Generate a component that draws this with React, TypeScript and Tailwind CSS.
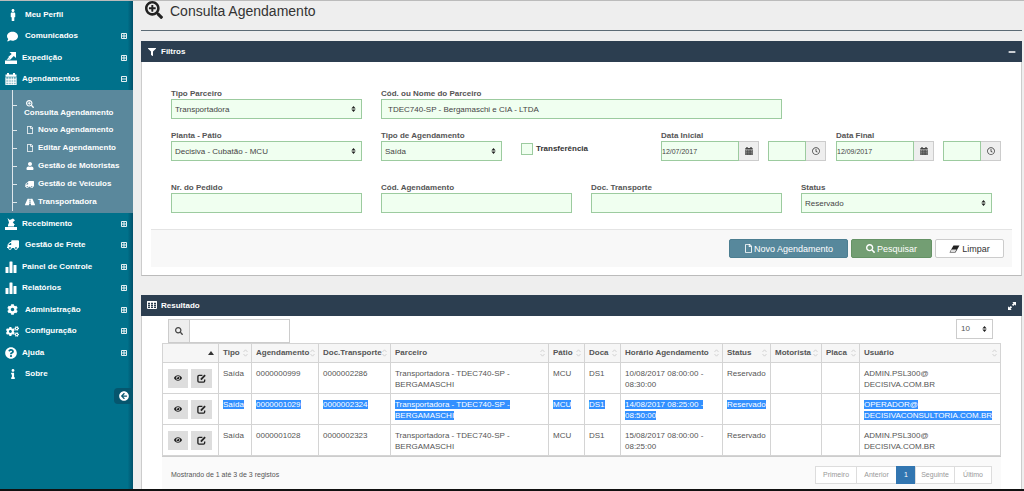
import { useState } from 'react';
import type { ReactNode } from 'react';
import {
  FaMale, FaComment, FaSearchPlus, FaRegFile, FaUser, FaTruck, FaRoad, FaCog, FaCogs,
  FaQuestionCircle, FaInfo, FaArrowCircleLeft, FaFilter, FaMinus, FaEye, FaSearch, FaRegClock,
} from 'react-icons/fa';

function TrayOut() {
  return (
    <svg viewBox="0 0 12 12" className="size-[12px]" fill="currentColor" aria-hidden="true">
      <path d="M0 8.5h12V12H0z" />
      <path d="M4.5 0H11v6L8.800 4.100 5.500 7.400 3.200 5.100 6.700 1.900z" />
      <path d="M1.500 7.800 3.800 5.600 5.600 7.800z" />
    </svg>
  );
}

function TrayIn() {
  return (
    <svg viewBox="0 0 12 12" className="size-[12px]" fill="currentColor" aria-hidden="true">
      <path d="M0 9h12v3H0z" />
      <path d="M2.500 0 4.800 2 8 .500 10 2.300 7.800 4.300 10 7H9v1.500H3V7l1-2.500z" />
    </svg>
  );
}

function Bars() {
  return (
    <svg viewBox="0 0 12 12" className="size-[12px]" fill="currentColor" aria-hidden="true">
      <rect x="0.500" y="6" width="3" height="6" rx="0.500" />
      <rect x="4.500" y="0.500" width="3" height="11.500" rx="0.500" />
      <rect x="8.500" y="4" width="3" height="8" rx="0.500" />
    </svg>
  );
}

function Calendar({ className }: { className: string }) {
  return (
    <svg viewBox="0 0 12 12" className={className} fill="currentColor" aria-hidden="true">
      <path d="M.500 1.500H2V0h2v1.500h4V0h2v1.500h1.500v2.300H.500z" />
      <path d="M.500 4.300h11V12H.500z" fillOpacity="0.550" />
      <path d="M.500 6.300h11v.900H.500zM.500 8.800h11v.900H.500zM.500 11.200h11v.800H.500zM.500 4.300h.800V12H.500zM3.400 4.300h.800V12h-.800zM5.800 4.300h.800V12h-.800zM8.200 4.300H9V12h-.800zM10.700 4.300h.800V12h-.800z" />
    </svg>
  );
}

function TableIcon() {
  return (
    <svg viewBox="0 0 10 9" className="h-[9px] w-[10px]" fill="none" stroke="currentColor" aria-hidden="true">
      <path d="M.500 .500h9v7h-9z" />
      <path d="M0 1h10" strokeWidth="1.500" />
      <path d="M3.500 1v7M6.500 1v7" />
      <path d="M0 3.500h10M0 5.500h10" strokeWidth="0.500" />
    </svg>
  );
}

function BoxMark({ open }: { open: boolean }) {
  return (
    <svg viewBox="0 0 6 6" className="size-[6px]" fill="none" stroke="currentColor" aria-hidden="true">
      <path d="M.500 .500h5v5h-5z" strokeWidth="0.900" />
      <path d={open ? 'M1 3h4' : 'M1 3h4M3 1v4'} strokeWidth="0.900" />
    </svg>
  );
}

function Eraser() {
  return (
    <svg viewBox="0 0 11 8" className="h-[8px] w-[11px]" aria-hidden="true">
      <path d="M4.500 .500h6L6.500 7.500H.500z" fill="#222" />
      <path d="M2.500 4.600h5L6.200 6.900H1.300z" fill="#fff" fillOpacity="0.850" />
    </svg>
  );
}

function Expand() {
  return (
    <svg viewBox="0 0 8 8" className="size-[8px]" fill="currentColor" aria-hidden="true">
      <path d="M4.300 0H8v3.700L6.800 2.500 5.200 4.100 3.900 2.800 5.500 1.200zM3.700 8H0V4.300l1.200 1.200 1.600-1.600 1.300 1.300L2.500 6.800z" />
    </svg>
  );
}

function EditIcon() {
  return (
    <svg viewBox="0 0 10 10" className="size-[9px]" fill="none" stroke="currentColor" aria-hidden="true">
      <path d="M6 1.500H2.200Q1 1.500 1 2.700v5.100Q1 9 2.200 9h5.100Q8.500 9 8.500 7.800V6" strokeWidth="1.500" />
      <path d="M4.300 6.200 9 1.300" strokeWidth="2" />
    </svg>
  );
}

function UpDown({ className }: { className: string }) {
  return (
    <svg viewBox="0 0 5 7" className={className} fill="currentColor" aria-hidden="true">
      <path d="M2.500 0 5 2.800H0zM2.500 7 0 4.200h5z" />
    </svg>
  );
}

type MenuEntry = { label: string; icon: ReactNode; indent?: boolean; mark?: 'plus' | 'minus' };

const topMenu: MenuEntry[] = [
  { label: 'Meu Perfil', icon: <FaMale className="size-[12px]" />, indent: true },
  { label: 'Comunicados', icon: <FaComment className="size-[11px]" />, indent: true, mark: 'plus' },
  { label: 'Expedição', icon: <TrayOut />, mark: 'plus' },
  { label: 'Agendamentos', icon: <Calendar className="size-[12px]" />, mark: 'minus' },
];

const bottomMenu: MenuEntry[] = [
  { label: 'Recebimento', icon: <TrayIn />, mark: 'plus' },
  { label: 'Gestão de Frete', icon: <FaTruck className="size-[12px] -scale-x-100" />, indent: true, mark: 'plus' },
  { label: 'Painel de Controle', icon: <Bars />, mark: 'plus' },
  { label: 'Relatórios', icon: <Bars />, mark: 'plus' },
  { label: 'Administração', icon: <FaCog className="size-[11px]" />, indent: true, mark: 'plus' },
  { label: 'Configuração', icon: <FaCogs className="size-[13px]" />, indent: true, mark: 'plus' },
  { label: 'Ajuda', icon: <FaQuestionCircle className="size-[12px]" />, mark: 'plus' },
  { label: 'Sobre', icon: <FaInfo className="size-[10px]" />, indent: true },
];

const subMenu = [
  { label: 'Novo Agendamento', icon: <FaRegFile className="size-[8px]" /> },
  { label: 'Editar Agendamento', icon: <FaRegFile className="size-[8px]" /> },
  { label: 'Gestão de Motoristas', icon: <FaUser className="size-[8px]" /> },
  { label: 'Gestão de Veículos', icon: <FaTruck className="size-[9px] -scale-x-100" /> },
  { label: 'Transportadora', icon: <FaRoad className="size-[10px]" /> },
];

function MenuList({ items }: { items: MenuEntry[] }) {
  return (
    <ul>
      {items.map((item) => (
        <li key={item.label} className="h-[21px] even:h-[22px]">
          <a href="#" className="flex h-full items-center pr-[6px]">
            <span className={item.indent ? 'flex w-[25px] justify-center' : 'flex w-[22px] justify-center'}>{item.icon}</span>
            <span className="flex-1">{item.label}</span>
            {item.mark && <BoxMark open={item.mark === 'minus'} />}
          </a>
        </li>
      ))}
    </ul>
  );
}

function Sidebar() {
  return (
    <nav className="w-[133px] shrink-0 bg-[#00718b] bg-linear-to-l from-[#00506a] to-[#00718b] to-4% pt-[3px] font-bold text-white">
      <MenuList items={topMenu} />
      <div className="bg-[#5a889c] pb-[2px] pl-[12px]">
        <ul className="border-l border-white/80 pt-[9px]">
          <li className="flex h-[22px]">
            <span className="mt-[6px] h-px w-[4px] bg-white/80" />
            <a href="#" className="ml-[7px] leading-[9px]">
              <FaSearchPlus className="ml-[2px] mt-px size-[8px]" />
              Consulta Agendamento
            </a>
          </li>
          {subMenu.map((item) => (
            <li key={item.label} className="flex h-[18px] items-center">
              <span className="h-px w-[4px] bg-white/80" />
              <a href="#" className="ml-[7px] flex items-center gap-[3px]">
                <span className="flex w-[11px] justify-center">{item.icon}</span>
                {item.label}
              </a>
            </li>
          ))}
        </ul>
      </div>
      <MenuList items={bottomMenu} />
      <div className="mt-[3px] flex justify-end">
        <button type="button" aria-label="Recolher menu" className="flex h-[16px] w-[19px] items-center justify-center rounded-l-sm bg-[#05566e]">
          <FaArrowCircleLeft className="size-[10px]" />
        </button>
      </div>
    </nav>
  );
}

const box = 'h-[20px] w-full min-w-0 border border-[#9ccb9f] bg-[#f0fff0] text-[#444] outline-none';

function TextField({ id, label, value = '', className = '' }: { id: string; label: string; value?: string; className?: string }) {
  return (
    <div className={className}>
      <label htmlFor={id} className="block font-bold">{label}</label>
      <input id={id} defaultValue={value} className={box + ' px-[6px]'} />
    </div>
  );
}

function SelectField({ id, label, value, className = '' }: { id: string; label: string; value: string; className?: string }) {
  return (
    <div className={className}>
      <label htmlFor={id} className="block font-bold">{label}</label>
      <div className="relative">
        <select id={id} className={box + ' block appearance-none px-[3px] pt-px'}>
          <option>{value}</option>
        </select>
        <UpDown className="pointer-events-none absolute right-[6px] top-[7px] h-[6px] w-[5px] text-[#222]" />
      </div>
    </div>
  );
}

const addon = 'flex h-[20px] w-[20px] shrink-0 items-center justify-center border border-l-0 border-[#ccc] bg-[#eee] text-[#444]';

function DateField({ id, label, value }: { id: string; label: string; value: string }) {
  return (
    <div className="w-[165px]">
      <label htmlFor={id} className="block font-bold">{label}</label>
      <div className="flex">
        <div className="flex w-[98px]">
          <input id={id} defaultValue={value} className={box + ' text-[7px]'} />
          <button type="button" aria-label="Abrir calendário" className={addon}><Calendar className="size-[8px]" /></button>
        </div>
        <div className="ml-[9px] flex w-[58px]">
          <input aria-label={label + ' hora'} className={box} />
          <button type="button" aria-label="Escolher hora" className={addon}><FaRegClock className="size-[8px]" /></button>
        </div>
      </div>
    </div>
  );
}

function Filters() {
  const [transfer, setTransfer] = useState(false);
  return (
    <section className="border border-t-0 border-[#ccc] border-b-[#bbb] bg-white">
      <header className="-mx-px flex h-[21px] items-center bg-[#2c3e50] pl-[7px] pr-[6px] font-bold text-white">
        <FaFilter className="size-[8px]" />
        <h2 className="ml-[5px] flex-1">Filtros</h2>
        <button type="button" aria-label="Minimizar"><FaMinus className="size-[8px]" /></button>
      </header>
      <form className="px-[9px] pb-[8px] pt-[27px]" onSubmit={(e) => e.preventDefault()}>
        <div className="grid grid-cols-4 gap-x-[19px] px-[20px]">
          <SelectField id="tipo-parceiro" label="Tipo Parceiro" value="Transportadora" />
          <TextField id="parceiro" label="Cód. ou Nome do Parceiro" value="TDEC740-SP - Bergamaschi e CIA - LTDA" className="col-span-2" />
          <div />
          <SelectField id="planta" label="Planta - Pátio" value="Decisiva - Cubatão - MCU" className="mt-[12px]" />
          <div className="col-span-3 -mr-[9px] mt-[12px] flex">
            <SelectField id="tipo-agendamento" label="Tipo de Agendamento" value="Saída" className="w-[121px]" />
            <label className="ml-[19px] mt-[12px] flex h-[12px] items-center gap-[3px] font-bold text-[#333]">
              <input
                type="checkbox"
                checked={transfer}
                onChange={(e) => setTransfer(e.target.checked)}
                className="size-[12px] appearance-none border border-[#9ccb9f] bg-[#f0fff0] checked:bg-[#739e73]"
              />
              Transferência
            </label>
            <div className="ml-auto flex gap-[10px]">
              <DateField id="data-inicial" label="Data Inicial" value="12/07/2017" />
              <DateField id="data-final" label="Data Final" value="12/09/2017" />
            </div>
          </div>
          <TextField id="pedido" label="Nr. do Pedido" className="mt-[22px]" />
          <TextField id="cod-agendamento" label="Cód. Agendamento" className="mt-[22px]" />
          <TextField id="doc-transporte" label="Doc. Transporte" className="mt-[22px]" />
          <SelectField id="status" label="Status" value="Reservado" className="mt-[22px]" />
        </div>
        <div className="mt-[16px] flex h-[38px] items-center justify-end gap-[3px] border-t border-[#e4e4e4] bg-[#f8f8f8] pr-[8px] text-[9px]">
          <button type="button" className="flex h-[19px] w-[119px] items-center justify-center gap-px rounded-[2px] border border-[#4c7e91] bg-[#57889c] text-white">
            <FaRegFile className="size-[9px]" />Novo Agendamento
          </button>
          <button type="submit" className="flex h-[19px] w-[81px] items-center justify-center gap-[2px] rounded-[2px] border border-[#659265] bg-[#739e73] text-white">
            <FaSearch className="size-[9px]" />Pesquisar
          </button>
          <button type="reset" className="flex h-[19px] w-[69px] items-center justify-center gap-[2px] rounded-[2px] border border-[#ccc] bg-white text-[#333]">
            <Eraser />Limpar
          </button>
        </div>
      </form>
    </section>
  );
}

const columns = [
  { label: '', width: 'w-[56px]' },
  { label: 'Tipo', width: 'w-[33px]' },
  { label: 'Agendamento', width: 'w-[67px]' },
  { label: 'Doc.Transporte', width: 'w-[72px]' },
  { label: 'Parceiro', width: '' },
  { label: 'Pátio', width: 'w-[36px]' },
  { label: 'Doca', width: 'w-[36px]' },
  { label: 'Horário Agendamento', width: 'w-[102px]' },
  { label: 'Status', width: 'w-[48px]' },
  { label: 'Motorista', width: 'w-[51px]' },
  { label: 'Placa', width: 'w-[38px]' },
  { label: 'Usuário', width: 'w-[141px]' },
];

const partner = ['Transportadora - TDEC740-SP -', 'BERGAMASCHI'];

const rows = [
  {
    selected: false,
    cells: [['Saída'], ['0000000999'], ['0000002286'], partner, ['MCU'], ['DS1'], ['10/08/2017 08:00:00 -', '08:30:00'], ['Reservado'], [], [], ['ADMIN.PSL300@', 'DECISIVA.COM.BR']],
  },
  {
    selected: true,
    cells: [['Saída'], ['0000001029'], ['0000002324'], partner, ['MCU'], ['DS1'], ['14/08/2017 08:25:00 -', '08:50:00'], ['Reservado'], [], [], ['OPERADOR@', 'DECISIVACONSULTORIA.COM.BR']],
  },
  {
    selected: false,
    cells: [['Saída'], ['0000001028'], ['0000002323'], partner, ['MCU'], ['DS1'], ['15/08/2017 08:00:00 -', '08:25:00'], ['Reservado'], [], [], ['ADMIN.PSL300@', 'DECISIVA.COM.BR']],
  },
];

const pages = [
  { label: 'Primeiro', width: 'w-[42px]' },
  { label: 'Anterior', width: 'w-[41px]' },
  { label: '1', width: 'w-[20px]' },
  { label: 'Seguinte', width: 'w-[40px]' },
  { label: 'Último', width: 'w-[38px]' },
];

function Results() {
  return (
    <section className="mt-[19px] flex flex-1 flex-col border-x border-[#ccc] bg-white">
      <header className="-mx-px flex h-[21px] items-center bg-[#2c3e50] pl-[6px] pr-[6px] font-bold text-white">
        <TableIcon />
        <h2 className="ml-[4px] flex-1">Resultado</h2>
        <button type="button" aria-label="Expandir"><Expand /></button>
      </header>
      <div className="flex flex-1 flex-col px-[20px] pt-[3px]">
        <div className="flex items-start justify-between pl-[6px] pr-[8px]">
          <label className="flex h-[24px] w-[122px] border border-[#ccc]">
            <span className="flex w-[21px] shrink-0 items-center justify-center border-r border-[#ccc] bg-[#eee] text-[#444]">
              <FaSearch className="size-[8px]" />
            </span>
            <input aria-label="Pesquisar resultados" className="w-full min-w-0 px-[4px] outline-none" />
          </label>
          <div className="relative">
            <select aria-label="Registos por página" className="block h-[20px] w-[37px] appearance-none border border-[#ccc] bg-white pl-[4px] text-[#555]">
              <option>10</option>
            </select>
            <UpDown className="pointer-events-none absolute right-[6px] top-[7px] h-[6px] w-[5px] text-[#222]" />
          </div>
        </div>
        <table className="w-full table-fixed border-separate border-spacing-0 border-l border-t border-[#d4d4d4]">
          <thead>
            <tr>
              {columns.map((c, i) => (
                <th key={i} scope="col" className={c.width + ' h-[19px] border-b border-r border-[#d4d4d4] bg-[#f6f6f6] p-0 pl-[4px] pr-[3px] text-left font-bold'}>
                  <span className="flex items-center justify-between whitespace-nowrap">
                    <span>{c.label}</span>
                    {i === 0 ? (
                      <svg viewBox="0 0 6 4" className="mr-px h-[4px] w-[6px]" fill="#333" aria-label="Ordem crescente"><path d="M3 0 6 4H0z" /></svg>
                    ) : (
                      <svg viewBox="0 0 5 8" className="h-[8px] w-[5px]" fill="none" stroke="#ccc" strokeWidth="0.800" aria-hidden="true">
                        <path d="M.500 3 2.500.800 4.500 3M.500 5l2 2.200 2-2.200" />
                      </svg>
                    )}
                  </span>
                </th>
              ))}
            </tr>
          </thead>
          <tbody>
            {rows.map((row, r) => (
              <tr key={r}>
                <td className="h-[31px] border-b border-r border-[#d4d4d4] p-0 pl-[5px]">
                  <div className="flex gap-[3px] text-[#222]">
                    <button type="button" aria-label="Visualizar" className="flex h-[19px] w-[20px] items-center justify-center bg-[#ddd]"><FaEye className="size-[8px]" /></button>
                    <button type="button" aria-label="Editar" className="flex h-[19px] w-[21px] items-center justify-center bg-[#ddd]"><EditIcon /></button>
                  </div>
                </td>
                {row.cells.map((lines, i) => (
                  <td key={i} className="border-b border-r border-[#d4d4d4] p-0 pb-[3px] pl-[4px] pt-[5px] align-top leading-[11px]">
                    {lines.map((line) => (
                      <span key={line} className="block whitespace-nowrap">
                        <span className={row.selected ? 'bg-[#3390ff] text-white' : ''}>{line}</span>
                      </span>
                    ))}
                  </td>
                ))}
              </tr>
            ))}
          </tbody>
        </table>
        <div className="flex flex-1 items-start justify-between border-t border-[#ccc] bg-[#fafafa] pl-[9px] pr-[9px] pt-[9px] text-[7px]">
          <p className="leading-[17px]">Mostrando de 1 até 3 de 3 registos</p>
          <div className="flex">
            {pages.map((p) => (
              <button
                key={p.label}
                type="button"
                className={
                  p.width + ' -ml-px h-[18px] border ' +
                  (p.label === '1' ? 'border-[#3276b1] bg-[#3276b1] text-white' : 'border-[#ddd] bg-white text-[#999]')
                }
              >
                {p.label}
              </button>
            ))}
          </div>
        </div>
      </div>
    </section>
  );
}

export default function App() {
  return (
    <div className="flex min-h-screen flex-col border-t border-[#bbb] bg-[#eee] font-['Liberation_Sans',Arial,sans-serif] text-[8px] leading-[10px] text-[#555]">
      <div className="flex flex-1">
        <Sidebar />
        <main className="flex min-w-0 flex-1 flex-col pl-[8px] pr-[2px]">
          <div className="mb-[10px] flex h-[30px] items-start border-b border-[#5c6b75] pl-[4px]">
            <FaSearchPlus className="size-[18px] text-[#222]" />
            <h1 className="ml-[7px] text-[14px] leading-[20px] text-[#333]">Consulta Agendamento</h1>
          </div>
          <Filters />
          <Results />
        </main>
      </div>
      <div className="h-[2px] bg-[#111]" />
    </div>
  );
}
